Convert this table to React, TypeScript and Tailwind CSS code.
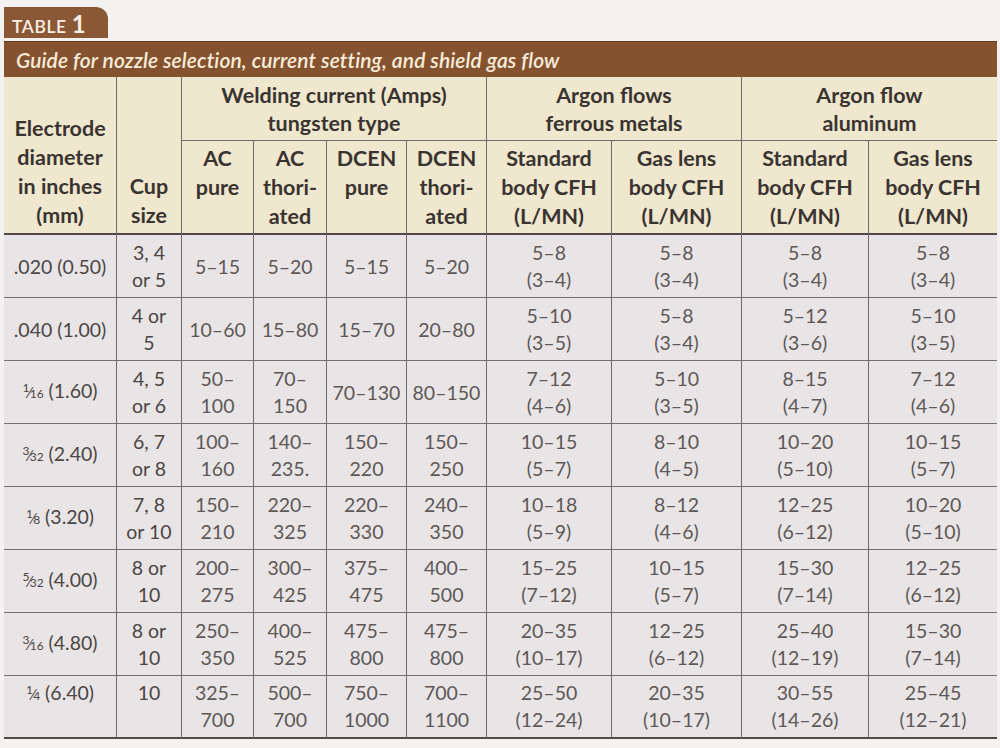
import React from "react";

const F = ({ n, d }: { n: string; d: string }) => (
  <span className="inline-flex items-baseline">
    <span className="text-[12px] relative -top-[6px]">{n}</span>
    <span className="text-[16px] -mx-[1px]">⁄</span>
    <span className="text-[12px]">{d}</span>
  </span>
);

type Row = {
  e: React.ReactNode;
  cup: string[];
  cur: string[][];
  flow: string[][];
};

const rows: Row[] = [
  { e: <>.020 (0.50)</>, cup: ["3, 4", "or 5"], cur: [["5–15"], ["5–20"], ["5–15"], ["5–20"]], flow: [["5–8", "(3–4)"], ["5–8", "(3–4)"], ["5–8", "(3–4)"], ["5–8", "(3–4)"]] },
  { e: <>.040 (1.00)</>, cup: ["4 or", "5"], cur: [["10–60"], ["15–80"], ["15–70"], ["20–80"]], flow: [["5–10", "(3–5)"], ["5–8", "(3–4)"], ["5–12", "(3–6)"], ["5–10", "(3–5)"]] },
  { e: <><F n="1" d="16" /> (1.60)</>, cup: ["4, 5", "or 6"], cur: [["50–", "100"], ["70–", "150"], ["70–130"], ["80–150"]], flow: [["7–12", "(4–6)"], ["5–10", "(3–5)"], ["8–15", "(4–7)"], ["7–12", "(4–6)"]] },
  { e: <><F n="3" d="32" /> (2.40)</>, cup: ["6, 7", "or 8"], cur: [["100–", "160"], ["140–", "235."], ["150–", "220"], ["150–", "250"]], flow: [["10–15", "(5–7)"], ["8–10", "(4–5)"], ["10–20", "(5–10)"], ["10–15", "(5–7)"]] },
  { e: <><F n="1" d="8" /> (3.20)</>, cup: ["7, 8", "or 10"], cur: [["150–", "210"], ["220–", "325"], ["220–", "330"], ["240–", "350"]], flow: [["10–18", "(5–9)"], ["8–12", "(4–6)"], ["12–25", "(6–12)"], ["10–20", "(5–10)"]] },
  { e: <><F n="5" d="32" /> (4.00)</>, cup: ["8 or", "10"], cur: [["200–", "275"], ["300–", "425"], ["375–", "475"], ["400–", "500"]], flow: [["15–25", "(7–12)"], ["10–15", "(5–7)"], ["15–30", "(7–14)"], ["12–25", "(6–12)"]] },
  { e: <><F n="3" d="16" /> (4.80)</>, cup: ["8 or", "10"], cur: [["250–", "350"], ["400–", "525"], ["475–", "800"], ["475–", "800"]], flow: [["20–35", "(10–17)"], ["12–25", "(6–12)"], ["25–40", "(12–19)"], ["15–30", "(7–14)"]] },
  { e: <><F n="1" d="4" /> (6.40)</>, cup: ["10"], cur: [["325–", "700"], ["500–", "700"], ["750–", "1000"], ["700–", "1100"]], flow: [["25–50", "(12–24)"], ["20–35", "(10–17)"], ["30–55", "(14–26)"], ["25–45", "(12–21)"]] },
];

function Cell({
  lines,
  last,
  top,
  right = true,
  dark,
}: {
  lines: React.ReactNode[];
  last: boolean;
  top: boolean;
  right?: boolean;
  dark?: boolean;
}) {
  return (
    <div
      className={
        "flex flex-col items-center text-center leading-[27px] " +
        (top ? "justify-start pt-[3px] " : "justify-center ") +
        (right ? "border-r border-[#6f6a69] " : "") +
        (last ? "border-b-2 border-b-[#4f4a48] " : "border-b-[1.5px] border-b-[#757070] ") +
        (dark ? "text-[#4b4645]" : "text-[#5d5857]")
      }
    >
      {lines.map((l, i) => (
        <span key={i} className="whitespace-nowrap">
          {l}
        </span>
      ))}
    </div>
  );
}

export default function App() {
  return (
    <div
      className="w-[1000px] h-[748px] bg-[#f4f2f0] overflow-hidden relative"
      style={{ fontFamily: "Lato, 'Open Sans', sans-serif" }}
    >
      <div className="pt-[7px] pl-[4px] w-[997px]">
        {/* Tab */}
        <div className="w-[104px] h-[31px] bg-[#8b5835] rounded-tr-[12px] flex items-end pl-[8px] pb-[3px] text-[#f7efe6]">
          <span className="text-[17.5px] font-semibold tracking-[0.6px] leading-none">TABLE</span>
          <span className="text-[24px] font-bold leading-none ml-[5px] -mb-[1px]">1</span>
        </div>
        {/* Title bar */}
        <div className="mt-[3px] h-[36px] bg-[#85522f] border-t border-[#5e3a20] flex items-center pl-[12px]">
          <span className="italic font-semibold text-[21px] text-[#f6ecd9] tracking-[0.1px]">
            Guide for nozzle selection, current setting, and shield gas flow
          </span>
        </div>
        {/* Table */}
        <div className="grid grid-cols-[113px_65px_72px_73px_80px_80px_125px_130px_127px_128px] grid-rows-[64px_94px] bg-[#efe7ce] text-[#3a3431] font-bold text-[21.5px] leading-[29px]">
          <div className="row-span-2 border-r border-[#6f6a69] border-b-2 border-b-[#4f4a48] flex flex-col items-center justify-end pb-[3px] text-center">
            <span>Electrode</span>
            <span>diameter</span>
            <span>in inches</span>
            <span>(mm)</span>
          </div>
          <div className="row-span-2 border-r border-[#6f6a69] border-b-2 border-b-[#4f4a48] flex flex-col items-center justify-end pb-[3px] text-center">
            <span>Cup</span>
            <span>size</span>
          </div>
          <div className="col-span-4 border-r border-[#6f6a69] border-b-[1.5px] border-b-[#6f6a69] flex flex-col items-center justify-center text-center leading-[28px]">
            <span>Welding current (Amps)</span>
            <span>tungsten type</span>
          </div>
          <div className="col-span-2 border-r border-[#6f6a69] border-b-[1.5px] border-b-[#6f6a69] flex flex-col items-center justify-center text-center leading-[28px]">
            <span>Argon flows</span>
            <span>ferrous metals</span>
          </div>
          <div className="col-span-2 border-b-[1.5px] border-b-[#6f6a69] flex flex-col items-center justify-center text-center leading-[28px]">
            <span>Argon flow</span>
            <span>aluminum</span>
          </div>
          {[
            ["AC", "pure"],
            ["AC", "thori-", "ated"],
            ["DCEN", "pure"],
            ["DCEN", "thori-", "ated"],
            ["Standard", "body CFH", "(L/MN)"],
            ["Gas lens", "body CFH", "(L/MN)"],
            ["Standard", "body CFH", "(L/MN)"],
            ["Gas lens", "body CFH", "(L/MN)"],
          ].map((ls, i) => (
            <div
              key={i}
              className={
                "flex flex-col items-center text-center pt-[3px] border-b-2 border-b-[#4f4a48] " +
                (i < 7 ? "border-r border-[#6f6a69] " : "")
              }
            >
              {ls.map((l, j) => (
                <span key={j} className="whitespace-nowrap">
                  {l}
                </span>
              ))}
            </div>
          ))}
        </div>
        <div className="grid grid-cols-[113px_65px_72px_73px_80px_80px_125px_130px_127px_128px] auto-rows-[63px] bg-[#e9e4e5] text-[19.5px] font-normal">
          {rows.map((r, ri) => {
            const last = ri === rows.length - 1;
            return (
              <React.Fragment key={ri}>
                <Cell lines={[r.e]} last={last} top={last} dark />
                <Cell lines={r.cup} last={last} top={last} dark />
                {r.cur.map((c, ci) => (
                  <Cell key={"c" + ci} lines={c} last={last} top={last} />
                ))}
                {r.flow.map((c, ci) => (
                  <Cell key={"f" + ci} lines={c} last={last} top={last} right={ci < 3} />
                ))}
              </React.Fragment>
            );
          })}
        </div>
      </div>
    </div>
  );
}
